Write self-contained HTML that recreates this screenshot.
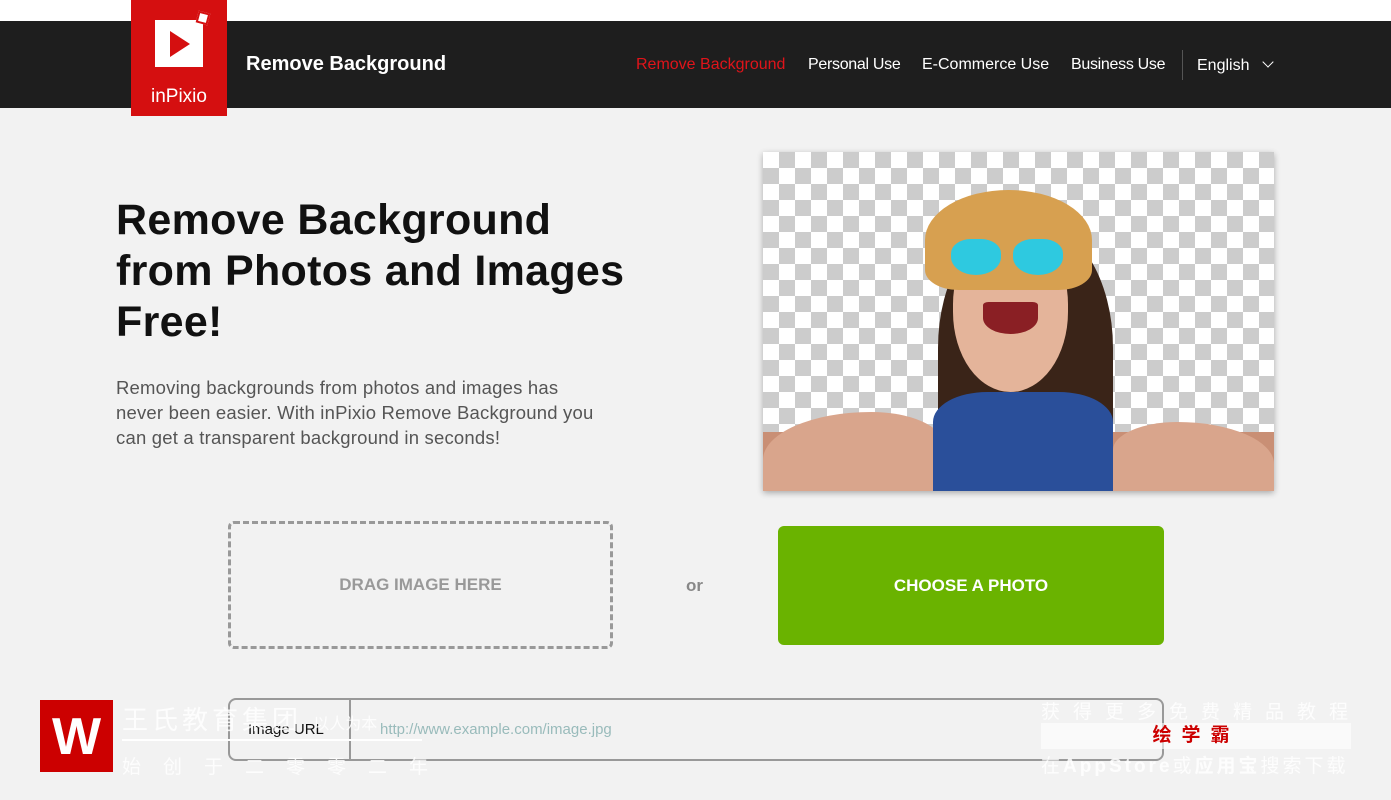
<!DOCTYPE html><html><head><meta charset="utf-8"><style>
*{margin:0;padding:0;box-sizing:border-box}
body{width:1391px;height:800px;background:#f2f2f2;font-family:"Liberation Sans","Noto Sans CJK SC",sans-serif;position:relative;overflow:hidden}
.a{position:absolute}
</style></head><body>
<div class="a" style="left:0;top:0;width:1391px;height:21px;background:#fff"></div>
<div class="a" style="left:0;top:21px;width:1391px;height:87px;background:#1e1e1e"></div>
<div class="a" style="left:131px;top:0;width:96px;height:116px;background:#d50f10"></div>
<div class="a" style="left:155px;top:20px;width:48px;height:47px;background:#fff"></div>
<div class="a" style="left:197px;top:12px;width:12px;height:12px;background:#fff;transform:rotate(15deg);border:2px solid #d50f10"></div>
<div class="a" style="left:170px;top:31px;width:0;height:0;border-top:13px solid transparent;border-bottom:13px solid transparent;border-left:20px solid #d50f10"></div>
<div class="a" style="left:131px;top:86px;width:96px;text-align:center;color:#fff;font-size:19px">inPixio</div>
<div class="a" style="left:246px;top:53px;color:#fff;font-size:20px;font-weight:bold">Remove Background</div>
<div class="a" style="left:636px;top:56px;color:#e0141a;font-size:16px">Remove Background</div>
<div class="a" style="left:808px;top:56px;color:#fff;font-size:16px;letter-spacing:-0.3px">Personal Use</div>
<div class="a" style="left:922px;top:56px;color:#fff;font-size:16px">E-Commerce Use</div>
<div class="a" style="left:1071px;top:56px;color:#fff;font-size:16px;letter-spacing:-0.3px">Business Use</div>
<div class="a" style="left:1182px;top:50px;width:1px;height:30px;background:#555"></div>
<div class="a" style="left:1197px;top:57px;color:#fff;font-size:16px">English</div>
<div class="a" style="left:1264px;top:58px;width:8px;height:8px;border-right:1.5px solid #fff;border-bottom:1.5px solid #fff;transform:rotate(45deg)"></div>
<div class="a" style="left:116px;top:195px;font-size:43px;line-height:51px;color:#111;font-weight:bold;letter-spacing:0.3px">Remove Background<br>from Photos and Images<br>Free!</div>
<div class="a" style="left:116px;top:375px;width:560px;font-size:18.5px;line-height:25px;color:#555;letter-spacing:0.2px;white-space:nowrap">Removing backgrounds from photos and images has<br>never been easier. With inPixio Remove Background you<br>can get a transparent background in seconds!</div>
<div class="a" style="left:763px;top:152px;width:511px;height:339px;box-shadow:0 2px 6px rgba(0,0,0,.3);overflow:hidden;background-color:#fff;background-image:linear-gradient(45deg,#ccc 25%,transparent 25%,transparent 75%,#ccc 75%),linear-gradient(45deg,#ccc 25%,transparent 25%,transparent 75%,#ccc 75%);background-size:32px 32px;background-position:0 0,16px 16px">
<div class="a" style="left:0;top:280px;width:511px;height:60px;background:#c98f75"></div>
<div class="a" style="left:0;top:260px;width:180px;height:80px;background:#d9a58c;border-radius:60% 40% 0 0"></div>
<div class="a" style="left:350px;top:270px;width:161px;height:70px;background:#d9a58c;border-radius:40% 60% 0 0"></div>
<div class="a" style="left:175px;top:70px;width:175px;height:280px;background:#3a2418;border-radius:45% 45% 10% 10%"></div>
<div class="a" style="left:170px;top:240px;width:180px;height:100px;background:#2a4f9a;border-radius:30% 30% 0 0"></div>
<div class="a" style="left:190px;top:80px;width:115px;height:160px;background:#e4b49a;border-radius:45% 45% 50% 50%"></div>
<div class="a" style="left:162px;top:38px;width:167px;height:100px;background:#d7a050;border-radius:50% 50% 20% 20%"></div>
<div class="a" style="left:188px;top:87px;width:50px;height:36px;background:#2ec9e0;border-radius:40% 40% 50% 50%"></div>
<div class="a" style="left:250px;top:87px;width:50px;height:36px;background:#2ec9e0;border-radius:40% 40% 50% 50%"></div>
<div class="a" style="left:220px;top:150px;width:55px;height:32px;background:#8a1f24;border-radius:10% 10% 50% 50%"></div>
</div>
<div class="a" style="left:228px;top:521px;width:385px;height:128px;border:3px dashed #999;border-radius:6px;text-align:center;line-height:122px;color:#999;font-size:17px;font-weight:bold">DRAG IMAGE HERE</div>
<div class="a" style="left:686px;top:576px;color:#888;font-size:17px;font-weight:bold">or</div>
<div class="a" style="left:778px;top:526px;width:386px;height:119px;background:#6ab300;border-radius:6px;text-align:center;line-height:119px;color:#fff;font-size:17px;font-weight:bold">CHOOSE A PHOTO</div>
<div class="a" style="left:228px;top:698px;width:936px;height:63px;border:2px solid #999;border-radius:8px"></div>
<div class="a" style="left:349px;top:699px;width:2px;height:61px;background:#999"></div>
<div class="a" style="left:248px;top:721px;font-size:15px;color:#111">Image URL</div>
<div class="a" style="left:380px;top:721px;font-size:15px;color:#9bb">http://www.example.com/image.jpg</div>
<div class="a" style="left:40px;top:700px;width:73px;height:72px;background:#c00"></div>
<div class="a" style="left:50px;top:712px;width:53px;height:50px;color:#fff;font-size:52px;font-weight:bold;line-height:50px;text-align:center">W</div>
<div class="a" style="left:122px;top:700px;color:rgba(255,255,255,.85);font-size:26px;letter-spacing:4px">王氏教育集团 <span style="font-size:16px;letter-spacing:0">以人为本</span></div>
<div class="a" style="left:122px;top:739px;width:300px;height:2px;background:#fff"></div>
<div class="a" style="left:122px;top:752px;color:rgba(255,255,255,.85);font-size:19px;letter-spacing:22px">始创于二零零二年</div>
<div class="a" style="left:1041px;top:697px;color:rgba(255,255,255,.85);font-size:19px;letter-spacing:13px">获得更多免费精品教程</div>
<div class="a" style="left:1041px;top:723px;width:310px;height:26px;background:rgba(255,255,255,.6);text-align:center;color:#c00;font-weight:bold;font-size:19px;letter-spacing:10px;line-height:26px">绘学霸</div>
<div class="a" style="left:1041px;top:751px;color:rgba(255,255,255,.85);font-size:19px;letter-spacing:3px">在<b>AppStore</b>或<b>应用宝</b>搜索下载</div>
</body></html>
